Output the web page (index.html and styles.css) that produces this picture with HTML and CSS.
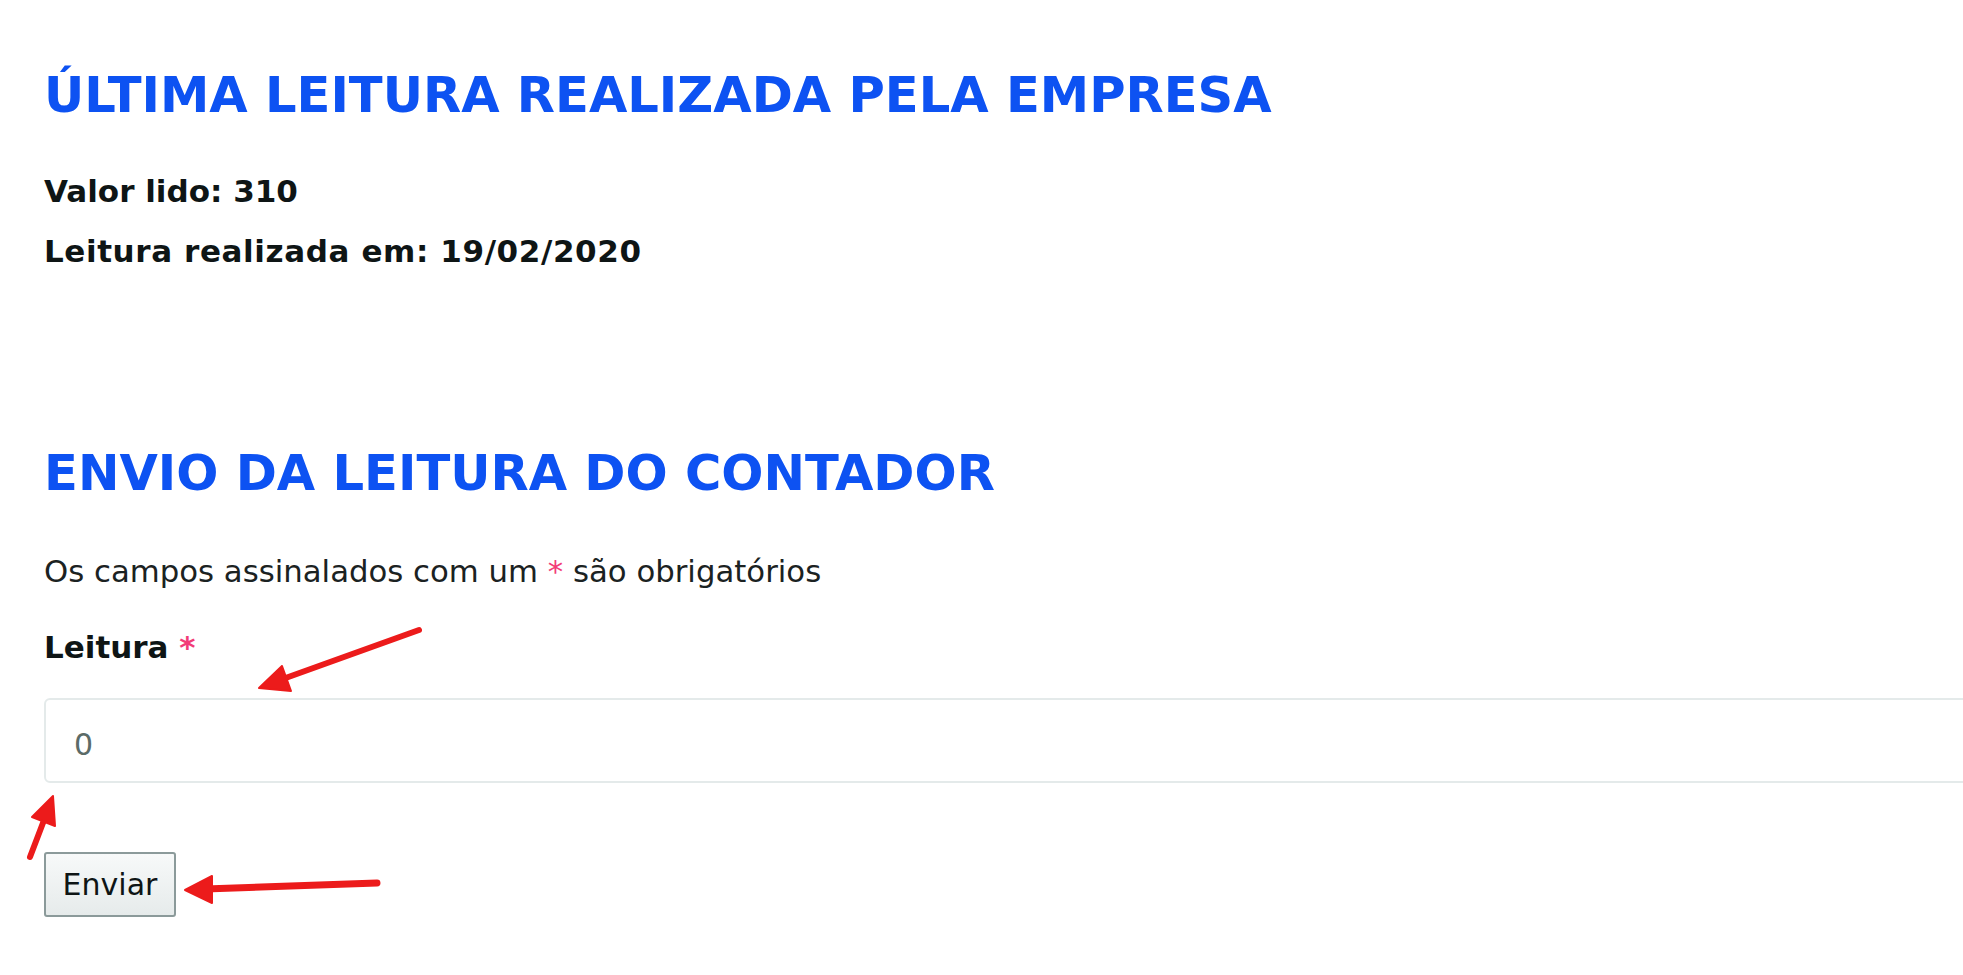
FILE: index.html
```html
<!DOCTYPE html>
<html lang="pt">
<head>
<meta charset="utf-8">
<title>Leitura do contador</title>
<link rel="stylesheet" href="styles.css">
</head>
<body>
<main class="page">
  <section class="block">
    <h2 class="title">ÚLTIMA LEITURA REALIZADA PELA EMPRESA</h2>
    <p class="info info-first">Valor lido: 310</p>
    <p class="info info-date">Leitura realizada em: 19/02/2020</p>
  </section>
  <section class="block block-send">
    <h2 class="title">ENVIO DA LEITURA DO CONTADOR</h2>
    <p class="note">Os campos assinalados com um <span class="req">*</span> são obrigatórios</p>
    <form class="form" onsubmit="return false">
      <label class="label" for="leitura">Leitura <span class="req">*</span></label>
      <div class="field-wrap">
        <input class="field" id="leitura" type="text" value="0">
      </div>
      <button class="submit" type="submit">Enviar</button>
    </form>
  </section>
  <svg class="annotations" width="1963" height="975" viewBox="0 0 1963 975" aria-hidden="true">
    <g fill="#ec1b1b" stroke="#ec1b1b" stroke-linecap="round" stroke-linejoin="round">
      <line x1="419" y1="630" x2="280" y2="680" stroke-width="6"/>
      <polygon points="259,688 291,691 282,666" stroke-width="2"/>
      <line x1="30" y1="857" x2="46" y2="815" stroke-width="6"/>
      <polygon points="53,796 55,826 32,817" stroke-width="2"/>
      <line x1="377" y1="883" x2="205" y2="889" stroke-width="7"/>
      <polygon points="185,890 212,876 212,903" stroke-width="2"/>
    </g>
  </svg>
</main>
</body>
</html>
```
FILE: styles.css
```css
html, body {
  margin: 0;
  padding: 0;
  background: #ffffff;
}

body {
  font-family: "DejaVu Sans", "Liberation Sans", sans-serif;
  color: #0e1515;
  overflow: hidden;
}

.page {
  position: relative;
  padding: 65px 0 0 44px;
  min-height: 910px;
}

.title {
  margin: 0;
  font-size: 49.6px;
  line-height: 60px;
  font-weight: bold;
  color: #0d52f2;
}

.info {
  margin: 20px 0 0;
  font-size: 31px;
  line-height: 40px;
  font-weight: bold;
}

.info-first {
  margin-top: 46px;
}

.info-date {
  letter-spacing: 0.6px;
}

.block-send {
  margin-top: 172px;
}

.note {
  margin: 48px 0 0;
  font-size: 30.75px;
  line-height: 40px;
  color: #1b2222;
}

.req {
  color: #f23c78;
}

.form {
  display: flex;
  flex-direction: column;
  align-items: flex-start;
}

.label {
  display: block;
  margin-top: 36px;
  font-size: 31px;
  line-height: 40px;
  font-weight: bold;
}

.field-wrap {
  align-self: stretch;
  margin-top: 31px;
  overflow: hidden;
}

.field {
  display: block;
  box-sizing: border-box;
  width: calc(100% + 12px);
  height: 85px;
  margin: 0;
  padding: 8px 0 0 28px;
  border: 2px solid #e4eaea;
  border-radius: 6px;
  background: #ffffff;
  font-family: "DejaVu Sans", sans-serif;
  font-size: 30px;
  color: #5b6b68;
  outline: none;
}

.submit {
  display: flex;
  align-items: center;
  justify-content: center;
  box-sizing: border-box;
  width: 132px;
  height: 65px;
  margin-top: 69px;
  padding: 0;
  border: 2px solid #8b9a9a;
  border-radius: 3px;
  background: linear-gradient(#f7f9f9, #e6ebeb);
  font-family: "DejaVu Sans", sans-serif;
  font-size: 30px;
  color: #0e1515;
}

.annotations {
  position: absolute;
  top: 0;
  left: 0;
  pointer-events: none;
}
```
